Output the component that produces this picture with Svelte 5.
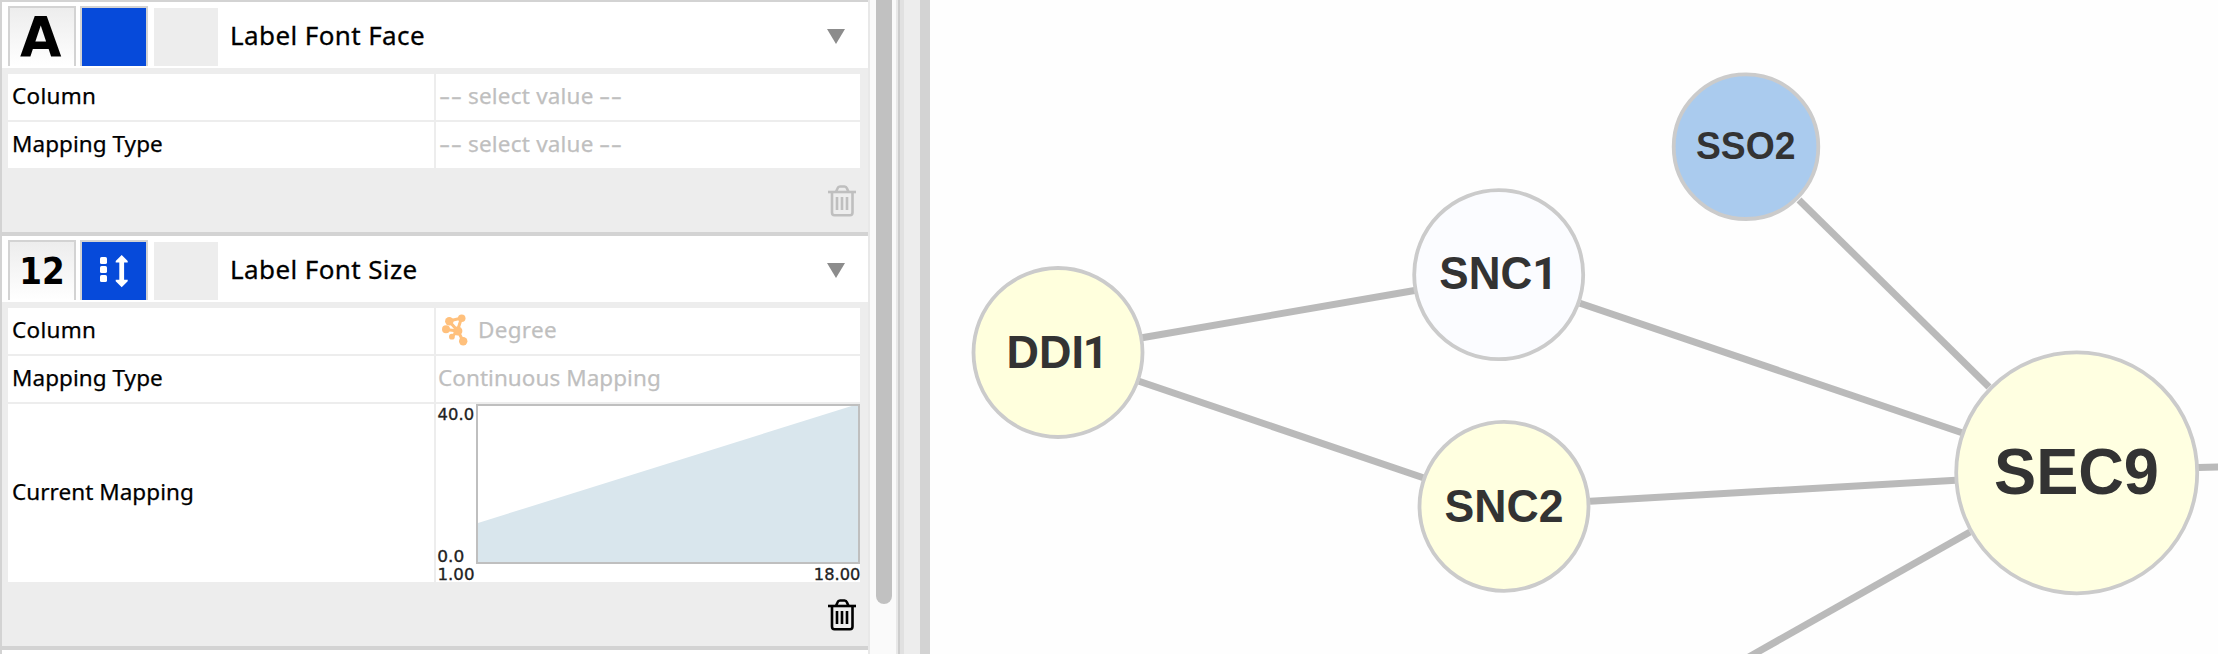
<script>
  // `one` is the start of a trailing digit 1, which is drawn without a foot
  const nodes = [
    { label: 'DDI', one: 1082.8, x: 1058, y: 352.5, r: 84.5, fill: '#ffffdd', size: 46, tx: 1006.6, base: 367.7, w: 77.4 },
    { label: 'SNC', one: 1532.3, x: 1498.7, y: 274.7, r: 84.5, fill: '#fbfcff', size: 46, tx: 1439.3, base: 289.3, w: 92.9 },
    { label: 'SSO2', x: 1746, y: 146.7, r: 72.3, fill: '#aacbee', size: 38.5, tx: 1696, base: 159.3, w: 99.5 },
    { label: 'SNC2', x: 1504, y: 506.3, r: 84.5, fill: '#ffffe0', size: 46, tx: 1444.5, base: 521.5, w: 119 },
    { label: 'SEC9', x: 2076.7, y: 472.8, r: 120.5, fill: '#ffffe1', size: 64.5, tx: 1994, base: 493.8, w: 165 },
  ];
  const edges = [
    [1142, 337.8, 1416, 290.2],
    [1139, 381.2, 1424, 478],
    [1580, 303.2, 1962, 432.8],
    [1590, 501.2, 1956, 480.3],
    [1799, 200, 1989, 387],
    [1970, 532, 1740, 662],
    [2198, 467.6, 2220, 467],
  ];
  const sections = [
    {
      glyph: 'A', title: 'Label Font Face', mapped: false,
      rows: [['Column', 'select value'], ['Mapping Type', 'select value']],
    },
    {
      glyph: '12', title: 'Label Font Size', mapped: true,
      rows: [['Column', 'Degree'], ['Mapping Type', 'Continuous Mapping']],
    },
  ];
</script>

<main>
  <div class="panel">
    {#each sections as s}
      <section>
        <header>
          <div class="tile default">
            <svg width="64" height="58">
              {#if s.glyph === 'A'}
                <text x="10" y="47.7" font-size="56" textLength="41.5" lengthAdjust="spacingAndGlyphs">A</text>
              {:else}
                <text x="9.3" y="42" font-size="37.5" textLength="45.5" lengthAdjust="spacingAndGlyphs">12</text>
              {/if}
            </svg>
          </div>
          <div class="tile mapping">
            {#if s.mapped}
              <svg width="64" height="58" fill="#fff">
                <rect x="18" y="15" width="7" height="7" rx="1.6" />
                <rect x="18" y="24" width="7" height="7" rx="1.6" />
                <rect x="18" y="33" width="7" height="7" rx="1.6" />
                <path d="M39.7 13l6 6v1.4h-3.6v17.4h3.6v1.4l-6 6l-6-6v-1.4h3.6V20.4h-3.6V19z" />
              </svg>
            {/if}
          </div>
          <div class="bypass"></div>
          <h2>{s.title}</h2>
          <svg class="arrow" width="18" height="15"><path d="M0 0H18L9 15Z" fill="#8c8c8c" /></svg>
        </header>
        <div class="table">
          {#each s.rows as [name, value]}
            <div class="row">
              <div class="name" class:tight={name === 'Mapping Type'}>{name}</div>
              <div class="value">
                {#if value === 'Degree'}
                  <svg class="net" width="26" height="32" fill="#ffc07c" stroke="#ffc07c">
                    <path d="M7 7L19.5 4L15.5 16.5ZM4 15.5L16 17M10 22.5L16 17L21 27" fill="none" stroke-width="3" />
                    <g stroke="none">
                      <circle cx="7.3" cy="7.3" r="4.2" /><circle cx="19.7" cy="4.2" r="3.8" />
                      <circle cx="4" cy="15.3" r="4" /><circle cx="15.8" cy="17" r="4.6" />
                      <circle cx="9.9" cy="22.7" r="2.9" /><circle cx="21.2" cy="27.2" r="4.2" />
                    </g>
                  </svg>
                {/if}
                {#if s.mapped}
                  <span class:tight={value !== 'Degree'}>{value}</span>
                {:else}
                  <span class="dash">--</span><span class="hint">{value}</span><span class="dash">--</span>
                {/if}
              </div>
            </div>
          {/each}
          {#if s.mapped}
            <div class="row tall">
              <div class="name tight">Current Mapping</div>
              <div class="value chart">
                <svg width="424" height="178">
                  <path d="M42 119L422 0H424V159H42Z" fill="#d9e6ed" />
                  <rect x="41" y="1" width="382" height="158" fill="none" stroke="#bfbfbf" stroke-width="2" />
                  <text x="1.6" y="15.6" textLength="36.5" lengthAdjust="spacingAndGlyphs">40.0</text>
                  <text x="1.2" y="157.6" textLength="27" lengthAdjust="spacingAndGlyphs">0.0</text>
                  <text x="1.5" y="175.6" textLength="37" lengthAdjust="spacingAndGlyphs">1.00</text>
                  <text x="377.8" y="175.6" textLength="46.5" lengthAdjust="spacingAndGlyphs">18.00</text>
                </svg>
              </div>
            </div>
          {/if}
        </div>
        <footer class:off={!s.mapped}>
          <svg width="28" height="32" fill="none" stroke="currentColor" stroke-width="2.6">
            <path d="M0 7H28" />
            <path d="M8 7L9.5 3.4Q10.2 1.500 12 1.500H16.500Q18.200 1.500 19 3.400L20.500 7" />
            <path d="M4 7V27.500Q4 30.300 6.500 30.300H22Q24.500 30.300 24.500 27.500V7" />
            <path d="M9 12V25M14 12V25M19 12V25" />
          </svg>
        </footer>
      </section>
    {/each}
  </div>
  <div class="track"><div class="thumb"></div></div>
  <div class="groove"></div>
  <div class="shade"></div>
  <div class="divider"></div>
  <svg class="network" viewBox="930 0 1288 654" width="1288" height="654">
    {#each edges as [x1, y1, x2, y2]}
      <line {x1} {y1} {x2} {y2} stroke="#bababa" stroke-width="7" />
    {/each}
    {#each nodes as n}
      <circle cx={n.x} cy={n.y} r={n.r} fill={n.fill} stroke="#cbcbcb" stroke-width="3.8" />
      <text x={n.tx} y={n.base} font-size={n.size}><tspan textLength={n.w} lengthAdjust="spacingAndGlyphs">{n.label}</tspan>{#if n.one}<tspan class="one" x={n.one}>1</tspan>{/if}</text>
    {/each}
  </svg>
</main>

<style>
  :global(body) { background: #fefefe; overflow: hidden; }
  main {
    display: flex;
    width: 2218px;
    height: 654px;
    overflow: hidden;
    background: #fefefe;
    font-family: "Noto Sans", "Open Sans", sans-serif;
    color: #000;
  }
  * { box-sizing: border-box; }
  svg { display: block; flex: none; overflow: visible; }
  .panel {
    width: 868px;
    border-left: 2px solid #d3d3d3;
    border-top: 2px solid #d3d3d3;
    background: #fff;
    flex: none;
  }
  section { background: #ededed; border-bottom: 4px solid #d3d3d3; }
  header {
    display: flex;
    align-items: flex-start;
    height: 66px;
    padding: 4px 23px 0 6px;
    background: #fff;
  }
  .tile {
    width: 68px;
    height: 60px;
    border: 2px solid #d3d3d3;
    border-bottom: 0;
    margin-right: 4px;
    flex: none;
  }
  .default { background: linear-gradient(#ededed, #fff); }
  .default text { font-family: "DejaVu Sans", sans-serif; font-weight: 700; }
  .mapping { background: #064ada; }
  .bypass { width: 64px; height: 58px; margin: 2px 12px 0 2px; background: #ededed; flex: none; }
  h2 {
    margin: 9px 0 0;
    font-size: 26px;
    line-height: 40px;
    font-weight: 400;
    letter-spacing: 0.4px;
    -webkit-text-stroke: 0.3px #000;
    white-space: nowrap;
    flex: 1;
  }
  .arrow { margin-top: 23px; }
  .table { display: flex; flex-direction: column; gap: 2px; padding: 6px 8px 0 6px; }
  .row { display: flex; gap: 2px; height: 46px; font-size: 22.5px; letter-spacing: 0.3px; }
  .name, .value { display: flex; align-items: center; background: #fff; white-space: nowrap; padding-bottom: 3px; }
  .name { width: 426px; padding-left: 4px; -webkit-text-stroke: 0.25px #000; }
  .value { width: 424px; padding-left: 2px; color: #bfbfbf; -webkit-text-stroke: 0.25px #bfbfbf; }
  .tight { letter-spacing: 0.05px; }
  .dash { width: 22px; margin-left: 1px; transform: scaleX(1.55); transform-origin: left; }
  .hint { width: 124px; margin: 0 6px 0 7px; letter-spacing: 0.2px; }
  .net { margin: 1px 10px 0 4px; }
  .tall { height: 178px; }
  .chart { padding: 0; -webkit-text-stroke: 0; letter-spacing: 0; }
  .chart text { font: 15.5px "DejaVu Sans", sans-serif; fill: #222; stroke: #222; stroke-width: 0.3px; }
  footer { display: flex; justify-content: flex-end; height: 64px; padding: 17px 12px 0 0; color: #000; }
  .off { color: #bfbfbf; }
  .track {
    width: 30px;
    border-left: 2px solid #e8e8e8;
    border-right: 2px solid #e8e8e8;
    background: #fafafa;
    padding-left: 6px;
    flex: none;
  }
  .thumb { width: 16px; height: 604px; border-radius: 0 0 8px 8px; background: #c1c1c1; }
  .groove { width: 2px; background: #cdcdcd; flex: none; }
  .shade { width: 20px; background: linear-gradient(90deg, #e1e1e1 4px, #ededed 4px); flex: none; }
  .divider { width: 10px; background: #d3d3d3; flex: none; }
  .network text { font-family: "Liberation Sans", Arial, sans-serif; font-weight: 700; fill: #333; }
  .network .one { font-family: Roboto, sans-serif; font-size: 44.5px; }
</style>
